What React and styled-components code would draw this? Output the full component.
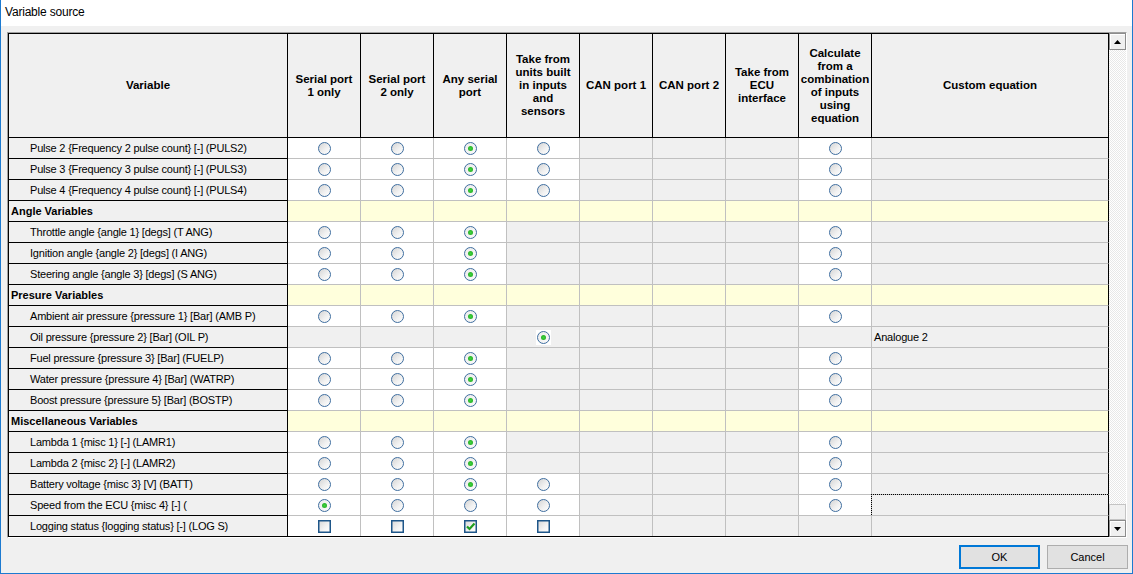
import React from 'react';
import styled, { createGlobalStyle, css } from 'styled-components';

const GlobalStyle = createGlobalStyle`
	html, body {
		margin: 0;
		padding: 0;
		background: #ffffff;
	}
`;

const Dialog = styled.div`
	width: 1133px;
	height: 574px;
	box-sizing: border-box;
	border: 1px solid #1c7ad0;
	border-top: none;
	background: #f0f0f0;
	display: flex;
	flex-direction: column;
	font-family: 'Liberation Sans', Arial, sans-serif;
	color: #000;
`;

const TitleBar = styled.div`
	height: 26px;
	flex: none;
	background: #ffffff;
	padding-left: 4px;
	font-size: 12px;
	letter-spacing: -0.2px;
	line-height: 25px;
`;

const Body = styled.div`
	flex: 1;
	display: flex;
	flex-direction: column;
	padding: 6px 4px 4px 6px;
`;

const Frame = styled.div`
	width: 1120px;
	height: 506px;
	box-sizing: border-box;
	border: 1px solid;
	border-color: #a0a0a0 #ffffff #ffffff #a0a0a0;
	display: flex;
`;

const Grid = styled.div`
	width: 1101px;
	box-sizing: border-box;
	border: 1px solid #000;
	border-right: none;
	display: flex;
	flex-direction: column;
`;

const columns = css`
	display: grid;
	grid-template-columns: 279px repeat(8, 73px) 237px;
`;

const HeaderRow = styled.div`
	${columns};
	height: 104px;
`;

const HeadCell = styled.div`
	box-sizing: border-box;
	background: #f0f0f0;
	border-right: 1px solid #000;
	border-bottom: 1px solid #000;
	display: flex;
	align-items: center;
	justify-content: center;
	text-align: center;
	font-weight: bold;
	font-size: 11.5px;
	line-height: 13px;
`;

const DataRow = styled.div`
	${columns};
	height: 21px;

	&:last-child {
		height: 20px;
	}
	&:last-child > div {
		border-bottom: none;
	}
`;

const NameCell = styled.div`
	box-sizing: border-box;
	background: #f0f0f0;
	border-right: 1px solid #000;
	border-bottom: 1px solid #000;
	display: flex;
	align-items: center;
	padding-left: ${(p) => (p.$category ? '2px' : '21px')};
	font-size: 11px;
	letter-spacing: ${(p) => (p.$category ? '0' : '-0.2px')};
	font-weight: ${(p) => (p.$category ? 'bold' : 'normal')};
	white-space: nowrap;
	overflow: hidden;
`;

const tones = {
	white: '#ffffff',
	gray: '#f0f0f0',
	yellow: '#ffffdc',
};

const DataCell = styled.div`
	box-sizing: border-box;
	background: ${(p) => tones[p.$tone]};
	border-right: 1px solid #c0c0c0;
	border-bottom: 1px solid #c0c0c0;
	display: flex;
	align-items: center;
	justify-content: center;
`;

const CustomCell = styled.div`
	box-sizing: border-box;
	background: ${(p) => tones[p.$tone]};
	border-right: 1px solid #000;
	border-bottom: 1px solid #c0c0c0;
	display: flex;
	align-items: center;
	padding-left: 2px;
	font-size: 11px;
	letter-spacing: -0.2px;
	${(p) =>
		p.$focused &&
		css`
			outline: 1px dotted #000;
			outline-offset: 0px;
		`}
`;

const RadioFrame = styled.span`
	width: 15px;
	height: 15px;
	background: #ffffff;
	display: flex;
	align-items: center;
	justify-content: center;
`;

const Radio = styled.span`
	position: relative;
	width: 13px;
	height: 13px;
	box-sizing: border-box;
	border-radius: 50%;
	border: 1px solid #3f6e9f;
	background: linear-gradient(135deg, #d4d4d4 0%, #f2f2f2 60%, #fdfdfd 100%);

	${(p) =>
		p.$checked &&
		css`
			background: linear-gradient(135deg, #ececec 0%, #fafafa 100%);
			&::after {
				content: '';
				position: absolute;
				left: 3px;
				top: 3px;
				width: 5px;
				height: 5px;
				border-radius: 50%;
				background: radial-gradient(circle, #3fd43f 0%, #1ea41e 100%);
			}
		`}
`;

const CheckBox = styled.span`
	width: 13px;
	height: 13px;
	box-sizing: border-box;
	border: 1px solid #1e5689;
	box-shadow: inset 0 0 0 0.5px #1e5689;
	background: linear-gradient(135deg, #d8d8d8 0%, #f4f4f4 60%, #ffffff 100%);
	display: flex;
	align-items: center;
	justify-content: center;
`;

const ScrollBar = styled.div`
	width: 17px;
	display: flex;
	flex-direction: column;
`;

const ScrollButton = styled.div`
	height: 17px;
	flex: none;
	box-sizing: border-box;
	background: #f0f0f0;
	border: 1px solid #8c8c8c;
	box-shadow: inset 1px 1px #ffffff;
	display: flex;
	align-items: center;
	justify-content: center;
`;

const Track = styled.div`
	flex: 1;
	background-color: #f4f4f4;
	background-image: repeating-conic-gradient(#e8e8e8 0 25%, #ffffff 0 50%);
	background-size: 2px 2px;
`;

const Thumb = styled.div`
	height: 16px;
	flex: none;
	box-sizing: border-box;
	background: #f0f0f0;
	border: 1px solid #c4c4c4;
`;

const ButtonRow = styled.div`
	display: flex;
	justify-content: flex-end;
	gap: 7px;
	padding-top: 7px;
`;

const Button = styled.div`
	width: 81px;
	height: 24px;
	box-sizing: border-box;
	background: #e1e1e1;
	border: ${(p) => (p.$default ? '2px solid #0078d7' : '1px solid #adadad')};
	display: flex;
	align-items: center;
	justify-content: center;
	font-size: 11px;
`;

const Arrow = ({ up }) => (
	<svg width="7" height="4" viewBox="0 0 7 4">
		<path d={up ? 'M0 4 L3.5 0 L7 4 Z' : 'M0 0 L7 0 L3.5 4 Z'} fill="#000" />
	</svg>
);

const Tick = () => (
	<svg width="11" height="11" viewBox="0 0 11 11">
		<path d="M2 5.5 L4.5 8 L9.5 2.5" fill="none" stroke="#1e9e1e" strokeWidth="2.2" />
	</svg>
);

const headers = [
	['Variable'],
	['Serial port', '1 only'],
	['Serial port', '2 only'],
	['Any serial', 'port'],
	['Take from', 'units built', 'in inputs', 'and', 'sensors'],
	['CAN port 1'],
	['CAN port 2'],
	['Take from', 'ECU', 'interface'],
	['Calculate', 'from a', 'combination', 'of inputs', 'using', 'equation'],
	['Custom equation'],
];

// r = radio, R = checked radio, G = checked radio on a disabled cell,
// c = checkbox, x = ticked checkbox, - = disabled cell
const SER = 'rrRr---r';
const SER3 = 'rrR----r';

const rows = [
	{ name: 'Pulse 2 {Frequency 2 pulse count} [-] (PULS2)', cells: SER },
	{ name: 'Pulse 3 {Frequency 3 pulse count} [-] (PULS3)', cells: SER },
	{ name: 'Pulse 4 {Frequency 4 pulse count} [-] (PULS4)', cells: SER },
	{ name: 'Angle Variables', category: true },
	{ name: 'Throttle angle {angle 1} [degs] (T ANG)', cells: SER3 },
	{ name: 'Ignition angle {angle 2} [degs] (I ANG)', cells: SER3 },
	{ name: 'Steering angle {angle 3} [degs] (S ANG)', cells: SER3 },
	{ name: 'Presure Variables', category: true },
	{ name: 'Ambient air pressure {pressure 1} [Bar] (AMB P)', cells: SER3 },
	{ name: 'Oil pressure {pressure 2} [Bar] (OIL P)', cells: '---G----', custom: 'Analogue 2' },
	{ name: 'Fuel pressure {pressure 3} [Bar] (FUELP)', cells: SER3 },
	{ name: 'Water pressure {pressure 4} [Bar] (WATRP)', cells: SER3 },
	{ name: 'Boost pressure {pressure 5} [Bar] (BOSTP)', cells: SER3 },
	{ name: 'Miscellaneous Variables', category: true },
	{ name: 'Lambda 1 {misc 1} [-] (LAMR1)', cells: SER3 },
	{ name: 'Lambda 2 {misc 2} [-] (LAMR2)', cells: SER3 },
	{ name: 'Battery voltage {misc 3} [V] (BATT)', cells: SER },
	{ name: 'Speed from the ECU {misc 4} [-] (', cells: 'Rrrr---r', focused: true },
	{ name: 'Logging status {logging status} [-] (LOG S)', cells: 'ccxc----' },
];

const Cell = ({ kind }) => {
	if (kind === '-') return <DataCell $tone="gray" />;
	const tone = kind === 'G' ? 'gray' : 'white';
	let control;
	if (kind === 'c' || kind === 'x') {
		control = <CheckBox>{kind === 'x' && <Tick />}</CheckBox>;
	} else {
		control = (
			<RadioFrame>
				<Radio $checked={kind !== 'r'} />
			</RadioFrame>
		);
	}
	return <DataCell $tone={tone}>{control}</DataCell>;
};

const App = () => (
	<>
		<GlobalStyle />
		<Dialog>
			<TitleBar>Variable source</TitleBar>
			<Body>
				<Frame>
					<Grid>
						<HeaderRow>
							{headers.map((lines, i) => (
								<HeadCell key={i}>
									<div>
										{lines.map((l, j) => (
											<div key={j}>{l}</div>
										))}
									</div>
								</HeadCell>
							))}
						</HeaderRow>
						{rows.map((row) => (
							<DataRow key={row.name}>
								<NameCell $category={row.category}>{row.name}</NameCell>
								{row.category ? (
									<>
										{Array.from({ length: 8 }, (_, i) => (
											<DataCell key={i} $tone="yellow" />
										))}
										<CustomCell $tone="yellow" />
									</>
								) : (
									<>
										{row.cells.split('').map((k, i) => (
											<Cell key={i} kind={k} />
										))}
										<CustomCell $tone="gray" $focused={row.focused}>
											{row.custom}
										</CustomCell>
									</>
								)}
							</DataRow>
						))}
					</Grid>
					<ScrollBar>
						<ScrollButton>
							<Arrow up />
						</ScrollButton>
						<Track />
						<Thumb />
						<ScrollButton>
							<Arrow />
						</ScrollButton>
					</ScrollBar>
				</Frame>
				<ButtonRow>
					<Button $default>OK</Button>
					<Button>Cancel</Button>
				</ButtonRow>
			</Body>
		</Dialog>
	</>
);

export default App;
